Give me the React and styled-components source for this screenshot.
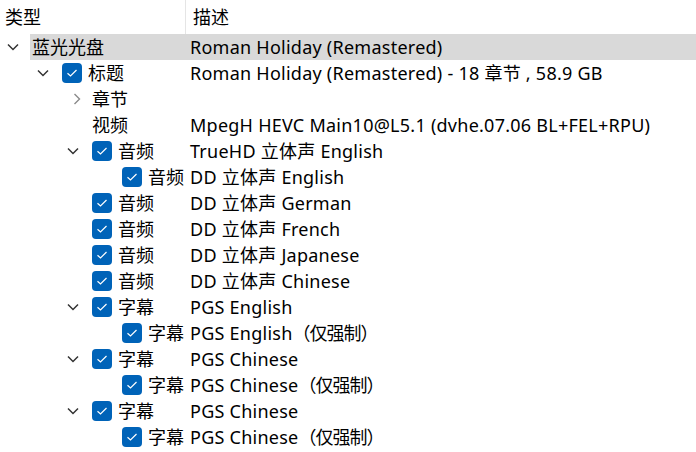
import React from "react";
import styled, { createGlobalStyle } from "styled-components";

const Global = createGlobalStyle`
  html, body { margin: 0; padding: 0; background: #fff; }
  body { font-family: "Noto Sans", "Noto Sans CJK SC", sans-serif; }
`;

const Table = styled.div`
  width: 696px;
  height: 452px;
  overflow: hidden;
  background: #fff;
  color: #000;
  font-size: 18px;
`;

const Header = styled.div`
  display: grid;
  grid-template-columns: 186px 1fr;
  height: 34px;
`;

const HeaderCell = styled.div`
  display: flex;
  align-items: center;
  padding-left: ${(p) => p.$pad}px;
  border-right: ${(p) => (p.$sep ? "1px solid #e5e5e5" : "none")};
  line-height: 1;
`;

const Row = styled.div`
  display: grid;
  grid-template-columns: 186px 1fr;
  height: 26px;
  align-items: stretch;
`;

const TypeCell = styled.div`
  display: flex;
  align-items: center;
  padding-left: ${(p) => p.$indent}px;
  white-space: nowrap;
  overflow: visible;
`;

const Expander = styled.div`
  width: 30px;
  height: 26px;
  flex: none;
  display: flex;
  align-items: center;
  justify-content: flex-start;
  padding-left: 7px;
  box-sizing: border-box;
`;

const Content = styled.div`
  flex: 1;
  height: 100%;
  display: flex;
  align-items: center;
  padding-left: 2px;
  background: ${(p) => (p.$selected ? "#d9d9d9" : "transparent")};
`;

const DescCell = styled.div`
  display: flex;
  align-items: center;
  padding-left: 4px;
  white-space: nowrap;
  letter-spacing: 0.25px;
  background: ${(p) => (p.$selected ? "#d9d9d9" : "transparent")};
`;

const Box = styled.div`
  width: 20px;
  height: 20px;
  border-radius: 4px;
  background: #0063b8;
  flex: none;
  display: flex;
  align-items: center;
  justify-content: center;
  margin-right: 6px;
`;

const Label = styled.span`
  line-height: 1;
  margin-bottom: 1px;
`;

const Paren = styled.span`
  letter-spacing: -1px;
`;

const Chevron = ({ dir }) =>
  dir === "down" ? (
    <svg width="12" height="8" viewBox="0 0 12 8">
      <path d="M1 1.5 L6 6.5 L11 1.5" fill="none" stroke="#333" strokeWidth="1.5" />
    </svg>
  ) : (
    <svg width="12" height="12" viewBox="0 0 12 12" style={{ marginLeft: 4 }}>
      <path d="M3.5 1 L8.5 6 L3.5 11" fill="none" stroke="#8a8a8a" strokeWidth="1.4" />
    </svg>
  );

const Check = () => (
  <Box>
    <svg width="12" height="10" viewBox="0 0 12 10">
      <path d="M1.5 5.2 L4.5 8 L10.5 2" fill="none" stroke="#fff" strokeWidth="1.2" />
    </svg>
  </Box>
);

const rows = [
  { l: 0, exp: "down", t: "蓝光光盘", d: "Roman Holiday (Remastered)", sel: true },
  { l: 1, exp: "down", c: true, t: "标题", d: "Roman Holiday (Remastered) - 18 章节 , 58.9 GB" },
  { l: 2, exp: "right", t: "章节", d: "" },
  { l: 2, t: "视频", d: "MpegH HEVC Main10@L5.1 (dvhe.07.06 BL+FEL+RPU)" },
  { l: 2, exp: "down", c: true, t: "音频", d: "TrueHD 立体声 English" },
  { l: 3, c: true, t: "音频", d: "DD 立体声 English" },
  { l: 2, c: true, t: "音频", d: "DD 立体声 German" },
  { l: 2, c: true, t: "音频", d: "DD 立体声 French" },
  { l: 2, c: true, t: "音频", d: "DD 立体声 Japanese" },
  { l: 2, c: true, t: "音频", d: "DD 立体声 Chinese" },
  { l: 2, exp: "down", c: true, t: "字幕", d: "PGS English" },
  { l: 3, c: true, t: "字幕", d: "PGS English", f: true },
  { l: 2, exp: "down", c: true, t: "字幕", d: "PGS Chinese" },
  { l: 3, c: true, t: "字幕", d: "PGS Chinese", f: true },
  { l: 2, exp: "down", c: true, t: "字幕", d: "PGS Chinese" },
  { l: 3, c: true, t: "字幕", d: "PGS Chinese", f: true },
];

export default function App() {
  return (
    <>
      <Global />
      <Table>
        <Header>
          <HeaderCell $pad={5} $sep>类型</HeaderCell>
          <HeaderCell $pad={7}>描述</HeaderCell>
        </Header>
        {rows.map((r, i) => (
          <Row key={i}>
            <TypeCell $indent={r.l * 30}>
              <Expander>{r.exp && <Chevron dir={r.exp} />}</Expander>
              <Content $selected={r.sel}>
                {r.c && <Check />}
                <Label>{r.t}</Label>
              </Content>
            </TypeCell>
            <DescCell $selected={r.sel}>
              <Label>
                {r.d}
                {r.f && <Paren>（仅强制）</Paren>}
              </Label>
            </DescCell>
          </Row>
        ))}
      </Table>
    </>
  );
}
